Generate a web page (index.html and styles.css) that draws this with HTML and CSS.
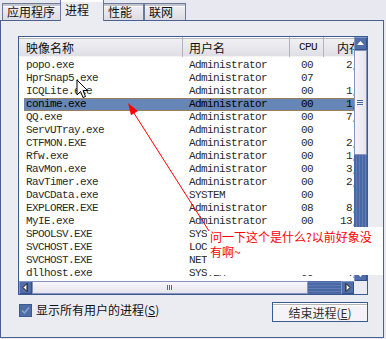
FILE: index.html
```html
<!DOCTYPE html>
<html lang="zh-CN">
<head>
    <meta charset="UTF-8">
    <title>Windows 任务管理器 - 进程</title>
    <link rel="stylesheet" href="styles.css">
</head>
<body>
    <div class="tabs">
        <div class="tab">应用程序</div>
        <div class="tab active">进程</div>
        <div class="tab">性能</div>
        <div class="tab">联网</div>
    </div>

    <div class="panel">
        <div class="listbox">
            <div class="list-main">
                <div class="list-head">
                    <div class="hcol h-name">映像名称</div>
                    <div class="hcol h-user">用户名</div>
                    <div class="hcol h-cpu">CPU</div>
                    <div class="hcol h-mem">内存使用</div>
                </div>
                <div class="rows">
                    <div class="row"><span class="c-name">popo.exe</span><span class="c-user">Administrator</span><span class="c-cpu">00</span><span class="c-mem">2,604 K</span></div>
                    <div class="row"><span class="c-name">HprSnap5.exe</span><span class="c-user">Administrator</span><span class="c-cpu">07</span><span class="c-mem"></span></div>
                    <div class="row"><span class="c-name">ICQLite.exe</span><span class="c-user">Administrator</span><span class="c-cpu">00</span><span class="c-mem">1,272 K</span></div>
                    <div class="row selected"><span class="c-name">conime.exe</span><span class="c-user">Administrator</span><span class="c-cpu">00</span><span class="c-mem">1,532 K</span></div>
                    <div class="row"><span class="c-name">QQ.exe</span><span class="c-user">Administrator</span><span class="c-cpu">00</span><span class="c-mem">7,148 K</span></div>
                    <div class="row"><span class="c-name">ServUTray.exe</span><span class="c-user">Administrator</span><span class="c-cpu">00</span><span class="c-mem"></span></div>
                    <div class="row"><span class="c-name">CTFMON.EXE</span><span class="c-user">Administrator</span><span class="c-cpu">00</span><span class="c-mem">2,036 K</span></div>
                    <div class="row"><span class="c-name">Rfw.exe</span><span class="c-user">Administrator</span><span class="c-cpu">00</span><span class="c-mem">1,120 K</span></div>
                    <div class="row"><span class="c-name">RavMon.exe</span><span class="c-user">Administrator</span><span class="c-cpu">00</span><span class="c-mem">3,412 K</span></div>
                    <div class="row"><span class="c-name">RavTimer.exe</span><span class="c-user">Administrator</span><span class="c-cpu">00</span><span class="c-mem">2,260 K</span></div>
                    <div class="row"><span class="c-name">DavCData.exe</span><span class="c-user">SYSTEM</span><span class="c-cpu">00</span><span class="c-mem"></span></div>
                    <div class="row"><span class="c-name">EXPLORER.EXE</span><span class="c-user">Administrator</span><span class="c-cpu">08</span><span class="c-mem">8,916 K</span></div>
                    <div class="row"><span class="c-name">MyIE.exe</span><span class="c-user">Administrator</span><span class="c-cpu">00</span><span class="c-mem">13,540 K</span></div>
                    <div class="row"><span class="c-name">SPOOLSV.EXE</span><span class="c-user">SYSTEM</span><span class="c-cpu">00</span><span class="c-mem">3,880 K</span></div>
                    <div class="row"><span class="c-name">SVCHOST.EXE</span><span class="c-user">LOCAL SERVICE</span><span class="c-cpu">00</span><span class="c-mem">3,024 K</span></div>
                    <div class="row"><span class="c-name">SVCHOST.EXE</span><span class="c-user">NETWORK SERVICE</span><span class="c-cpu">00</span><span class="c-mem">2,408 K</span></div>
                    <div class="row"><span class="c-name">dllhost.exe</span><span class="c-user">SYSTEM</span><span class="c-cpu">00</span><span class="c-mem">4,112 K</span></div>
                </div>
            </div>

            <div class="vscroll">
                <div class="sbtn">
                    <svg width="13" height="13" viewBox="0 0 13 13"><polygon points="3,8 10,8 6.5,4" fill="#fff"/></svg>
                </div>
                <div class="vthumb">
                    <svg width="7" height="6" viewBox="0 0 7 6"><rect x="0" y="0" width="6" height="1" fill="#4a68a3"/><rect x="0" y="2" width="6" height="1" fill="#4a68a3"/><rect x="0" y="4" width="6" height="1" fill="#4a68a3"/></svg>
                </div>
                <div class="vtrack"></div>
                <div class="sbtn">
                    <svg width="13" height="13" viewBox="0 0 13 13"><polygon points="3,5 10,5 6.5,9" fill="#fff"/></svg>
                </div>
            </div>

            <div class="hscroll">
                <div class="sbtn">
                    <svg width="13" height="13" viewBox="0 0 13 13"><polygon points="8,2.5 8,10.5 4,6.5" fill="#fff" stroke="#111" stroke-width="1"/></svg>
                </div>
                <div class="hthumb">
                    <svg width="6" height="5" viewBox="0 0 6 5"><rect x="0" y="0" width="1" height="5" fill="#4a68a3"/><rect x="2" y="0" width="1" height="5" fill="#4a68a3"/><rect x="4" y="0" width="1" height="5" fill="#4a68a3"/></svg>
                </div>
                <div class="htrack"></div>
                <div class="sbtn">
                    <svg width="13" height="13" viewBox="0 0 13 13"><polygon points="5,2.5 5,10.5 9,6.5" fill="#fff" stroke="#111" stroke-width="1"/></svg>
                </div>
            </div>
            <div class="corner"></div>
        </div>

        <div class="footer">
            <label class="check">
                <span class="box">
                    <svg width="13" height="13" viewBox="0 0 13 13"><path d="M3 6.5 L5.5 9 L10 3.5" fill="none" stroke="#8ea4cf" stroke-width="1.5"/></svg>
                </span>
                <span>显示所有用户的进程(<u>S</u>)</span>
            </label>
            <button class="end-btn">结束进程(<u>E</u>)</button>
        </div>
    </div>

    <!-- annotation pasted over the screenshot -->
    <div class="note">问一下这个是什么?以前好象没<br>有啊~</div>

    <svg class="arrow" width="386" height="339" viewBox="0 0 386 339">
        <line x1="209" y1="231" x2="132" y2="110" stroke="#f00" stroke-width="1"/>
        <polygon points="128,103 137.8,111 131,115.2" fill="#f00"/>
    </svg>

    <svg class="cursor" width="14" height="22" viewBox="0 0 14 22">
        <path d="M1 1 L1 16 L4.5 12.5 L7 18.5 L9.5 17.5 L7 11.5 L11.5 11.5 Z" fill="#fff" stroke="#000" stroke-width="1"/>
    </svg>
</body>
</html>
```

FILE: styles.css
```css
body {
    margin: 0;
    width: 386px;
    height: 339px;
    background: #e8e8f0;
    font-family: "Noto Sans CJK SC", "Liberation Sans", sans-serif;
    font-size: 12px;
    color: #222;
    overflow: hidden;
    position: relative;
}
.tabs {
    display: flex;
    align-items: flex-end;
    height: 20px;
    padding-left: 2px;
}
.tab {
    height: 16px;
    line-height: 16px;
    padding: 0 4px;
    border: 1px solid #6b7a9c;
    border-bottom: none;
    background: linear-gradient(#f2f2f5, #dcdce2);
    box-shadow: inset 0 2px 0 #c4c4cc, inset 0 3px 0 #fafafa;
    color: #111;
    font-size: 12px;
}
.tab:first-child {
    width: 49px;
}
.tab:nth-child(3) {
    width: 31px;
}
.tab:nth-child(4) {
    width: 32px;
}
.tab.active {
    position: relative;
    z-index: 1;
    height: 21px;
    line-height: 20px;
    margin-bottom: -1px;
    width: 34px;
    background: #ebebf2;
    box-shadow: inset 0 2px 0 #fff;
    margin-left: -1px;
    margin-right: -1px;
}
.panel {
    width: 384px;
    height: 318px;
    box-sizing: border-box;
    border: 1px solid #4c6190;
    background: #ebebf2;
    padding: 15px 15px 0 17px;
}
.listbox {
    width: 350px;
    height: 259px;
    box-sizing: border-box;
    border: 1px solid #3b5a8f;
    background: #fff;
    display: grid;
    grid-template-columns: 335px 13px;
    grid-template-rows: 244px 13px;
}
.list-main {
    overflow: hidden;
    position: relative;
}
.list-head {
    display: flex;
    height: 20px;
    background: linear-gradient(#f3f3f6, #dedde4);
    box-shadow: inset 0 1px 0 #fff, inset 0 2px 0 #b9b9c2, inset 0 -1px 0 #f4f4f7;
    white-space: nowrap;
}
.hcol {
    flex: none;
    line-height: 21px;
    border-right: 1px solid #b3b3bb;
    color: #111;
    overflow: hidden;
}
.h-name {
    width: 156px;
    padding-left: 7px;
}
.h-user {
    width: 100px;
    padding-left: 6px;
}
.h-cpu {
    width: 27px;
    padding-right: 6px;
    text-align: right;
    font-family: "Liberation Mono", monospace;
    font-size: 11px;
    letter-spacing: -0.6px;
}
.h-mem {
    width: 80px;
    padding-left: 13px;
    border-right: none;
}
.rows {
    padding: 2px 0 0 5px;
}
.row {
    display: flex;
    width: 400px;
    height: 13px;
    line-height: 13px;
    font-family: "Liberation Mono", monospace;
    font-size: 11px;
    letter-spacing: -0.6px;
    color: #2a2a2a;
    white-space: nowrap;
}
.row.selected {
    background: #6686b7;
    box-shadow: inset 0 1px 0 #9b7f5c, inset 0 -1px 0 #9b7f5c;
    color: #000;
}
.row span {
    flex: none;
    overflow: hidden;
}
.c-name {
    width: 157px;
    padding-left: 2px;
}
.c-user {
    width: 101px;
    padding-left: 6px;
}
.c-cpu {
    width: 23px;
    padding-right: 11px;
    text-align: right;
}
.c-mem {
    width: 64px;
    padding-right: 4px;
    text-align: right;
}
.vscroll {
    display: flex;
    flex-direction: column;
}
.sbtn {
    width: 13px;
    height: 13px;
    flex-shrink: 0;
    background: #4f6da8;
    box-shadow: inset 1px 1px 0 #7d97c8, inset -1px -1px 0 #34508a;
}
.sbtn svg {
    display: block;
}
.vthumb {
    height: 105px;
    flex-shrink: 0;
    box-sizing: border-box;
    border: 1px solid #8594bd;
    background: linear-gradient(90deg, #f6f4f8, #e6e4ee);
    display: flex;
    align-items: center;
    justify-content: center;
}
.vthumb svg,
.hthumb svg {
    display: block;
}
.vtrack {
    flex: 1;
    background: repeating-linear-gradient(90deg, #4a68a3 0 2px, #5f7cb5 2px 3px);
}
.htrack {
    flex: 1;
    background: repeating-linear-gradient(0deg, #4a68a3 0 2px, #5f7cb5 2px 3px);
}
.hscroll {
    display: flex;
}
.hthumb {
    width: 276px;
    flex-shrink: 0;
    box-sizing: border-box;
    border: 1px solid #8594bd;
    background: linear-gradient(#f8f6fa, #e6e4ee);
    display: flex;
    align-items: center;
    justify-content: center;
}
.corner {
    background: #ebebf2;
}
.footer {
    display: flex;
    justify-content: space-between;
    align-items: flex-start;
    margin-top: 7px;
    width: 350px;
}
.check {
    display: flex;
    align-items: center;
    gap: 4px;
    margin-top: 1px;
    margin-left: 1px;
    color: #111;
    line-height: 14px;
}
.box {
    width: 13px;
    height: 13px;
    box-sizing: border-box;
    background: #4f6da8;
    border: 1px solid #3b5a8f;
}
.box svg {
    display: block;
    margin: -1px;
}
.end-btn {
    width: 96px;
    height: 20px;
    border: 1px solid #3b5a8f;
    background: #f5f3f7;
    box-shadow: inset 0 1px 0 #fff, inset 0 2px 0 #b4b4b4, inset 0 3px 0 #fff;
    font-family: "Noto Sans CJK SC", "Liberation Sans", sans-serif;
    font-size: 12px;
    color: #333;
    padding: 2px 0 0;
    line-height: 14px;
}
.note {
    position: absolute;
    left: 207px;
    top: 227px;
    width: 176px;
    height: 48px;
    box-sizing: border-box;
    background: #fff;
    color: #f00;
    padding: 2px 0 0 3px;
    line-height: 15px;
    font-size: 12px;
    white-space: nowrap;
}
.arrow {
    position: absolute;
    left: 0;
    top: 0;
    pointer-events: none;
}
.cursor {
    position: absolute;
    left: 76px;
    top: 79px;
}
```
